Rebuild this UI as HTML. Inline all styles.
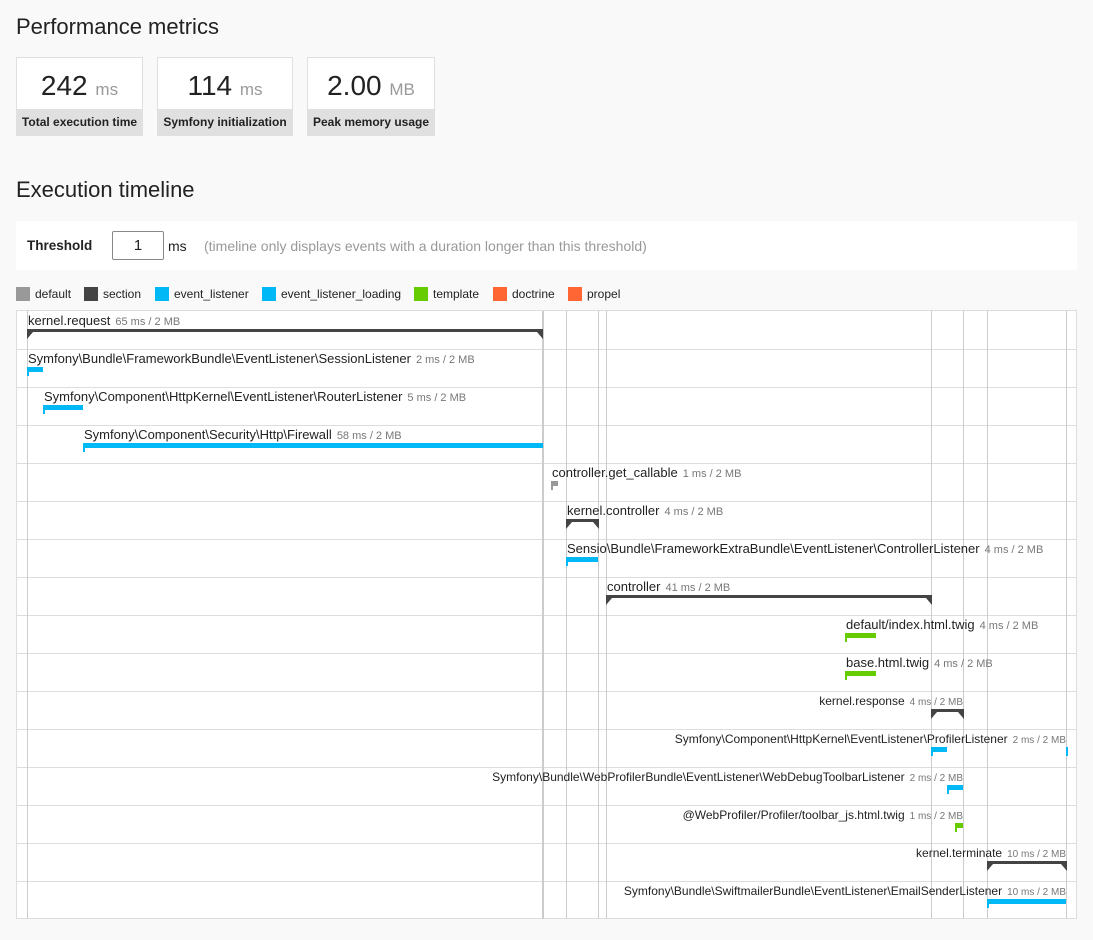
<!DOCTYPE html>
<html><head><meta charset="utf-8">
<style>
body{margin:0;background:#f9f9f9;font-family:"Liberation Sans",Arial,sans-serif;color:#222;width:1093px;height:940px;position:relative;overflow:hidden}
.a{position:absolute}
h2{position:absolute;margin:0;font-weight:normal;font-size:22px;color:#222}
.m{position:absolute;top:57px;height:79px;background:#fff;border:1px solid #e0e0e0;box-sizing:border-box;text-align:center}
.m .v{font-size:28px;line-height:28px;margin-top:14px;color:#222}
.m .v span{font-size:17px;color:#999}
.m .l{position:absolute;left:0;right:0;bottom:0;height:26px;line-height:26px;background:#e0e0e0;font-size:12px;font-weight:bold}
.lg{position:absolute;top:287px;font-size:12px;line-height:14px;padding-left:19px;color:#222}
.lg i{position:absolute;left:0;top:0;width:14px;height:14px}
.tl{position:absolute;left:16px;top:310px;width:1061px;height:609px;background:#fff;border:1px solid #ddd;box-sizing:border-box}
.hl{position:absolute;left:16px;width:1061px;height:1px;background:#ddd}
.vl{position:absolute;top:311px;height:608px;width:1px;background:#ccc}
.t{position:absolute;font-size:13px;white-space:nowrap;line-height:15px}
.t small{font-size:11px;color:#777;margin-left:5px}
.t.r{font-size:12px;margin-top:1px}
.t.r small{font-size:10px;margin-left:5px}
.sb{position:absolute;height:3px;background:#444}
.sb:before{content:"";position:absolute;left:0;top:3px;border-top:7px solid #444;border-right:6px solid transparent}
.sb:after{content:"";position:absolute;right:0;top:3px;border-top:7px solid #444;border-left:6px solid transparent}
.eb{position:absolute;height:5px}
.eb:before{content:"";position:absolute;left:0;top:5px;width:2px;height:4px;background:inherit}
</style></head><body>
<h2 style="left:16px;top:14px">Performance metrics</h2>
<div class="m" style="left:16px;width:127px"><div class="v">242 <span>ms</span></div><div class="l">Total execution time</div></div>
<div class="m" style="left:157px;width:136px"><div class="v">114 <span>ms</span></div><div class="l">Symfony initialization</div></div>
<div class="m" style="left:307px;width:128px"><div class="v">2.00 <span>MB</span></div><div class="l">Peak memory usage</div></div>
<h2 style="left:16px;top:177px">Execution timeline</h2>
<div class="a" style="left:16px;top:221px;width:1061px;height:49px;background:#fff"></div>
<div class="a" style="left:27px;top:238px;font-size:13.5px;font-weight:bold">Threshold</div>
<div class="a" style="left:112px;top:231px;width:50px;height:27px;border:1px solid #888;border-radius:2px;background:#fff;text-align:center;font-size:15px;line-height:27px">1</div>
<div class="a" style="left:168px;top:238px;font-size:14px">ms</div>
<div class="a" style="left:204px;top:238px;font-size:14px;color:#999">(timeline only displays events with a duration longer than this threshold)</div>

<div class="lg" style="left:16px"><i style="background:#999"></i>default</div>
<div class="lg" style="left:84px"><i style="background:#444"></i>section</div>
<div class="lg" style="left:155px"><i style="background:#00b8f5"></i>event_listener</div>
<div class="lg" style="left:262px"><i style="background:#00b8f5"></i>event_listener_loading</div>
<div class="lg" style="left:414px"><i style="background:#66cc00"></i>template</div>
<div class="lg" style="left:493px"><i style="background:#ff6633"></i>doctrine</div>
<div class="lg" style="left:568px"><i style="background:#ff6633"></i>propel</div>

<div class="tl"></div>
<div class="hl" style="top:349px"></div><div class="hl" style="top:387px"></div><div class="hl" style="top:425px"></div><div class="hl" style="top:463px"></div>
<div class="hl" style="top:501px"></div><div class="hl" style="top:539px"></div><div class="hl" style="top:577px"></div><div class="hl" style="top:615px"></div>
<div class="hl" style="top:653px"></div><div class="hl" style="top:691px"></div><div class="hl" style="top:729px"></div><div class="hl" style="top:767px"></div>
<div class="hl" style="top:805px"></div><div class="hl" style="top:843px"></div><div class="hl" style="top:881px"></div>
<div class="vl" style="left:27px"></div><div class="vl" style="left:542px;width:2px"></div><div class="vl" style="left:566px"></div>
<div class="vl" style="left:598px"></div><div class="vl" style="left:606px"></div><div class="vl" style="left:931px"></div>
<div class="vl" style="left:963px"></div><div class="vl" style="left:987px"></div><div class="vl" style="left:1066px"></div>

<div class="t" style="left:28px;top:313px">kernel.request<small>65 ms / 2 MB</small></div>
<div class="sb" style="left:27px;top:329px;width:516px"></div>
<div class="t" style="left:28px;top:351px">Symfony\Bundle\FrameworkBundle\EventListener\SessionListener<small>2 ms / 2 MB</small></div>
<div class="eb" style="left:27px;top:367px;width:16px;background:#00b8f5"></div>
<div class="t" style="left:44px;top:389px">Symfony\Component\HttpKernel\EventListener\RouterListener<small>5 ms / 2 MB</small></div>
<div class="eb" style="left:43px;top:405px;width:40px;background:#00b8f5"></div>
<div class="t" style="left:84px;top:427px">Symfony\Component\Security\Http\Firewall<small>58 ms / 2 MB</small></div>
<div class="eb" style="left:83px;top:443px;width:460px;background:#00b8f5"></div>
<div class="t" style="left:552px;top:465px">controller.get_callable<small>1 ms / 2 MB</small></div>
<div class="eb" style="left:551px;top:481px;width:7px;background:#999"></div>
<div class="t" style="left:567px;top:503px">kernel.controller<small>4 ms / 2 MB</small></div>
<div class="sb" style="left:566px;top:519px;width:33px"></div>
<div class="t" style="left:567px;top:541px">Sensio\Bundle\FrameworkExtraBundle\EventListener\ControllerListener<small>4 ms / 2 MB</small></div>
<div class="eb" style="left:566px;top:557px;width:32px;background:#00b8f5"></div>
<div class="t" style="left:607px;top:579px">controller<small>41 ms / 2 MB</small></div>
<div class="sb" style="left:606px;top:595px;width:326px"></div>
<div class="t" style="left:846px;top:617px">default/index.html.twig<small>4 ms / 2 MB</small></div>
<div class="eb" style="left:845px;top:633px;width:31px;background:#66cc00"></div>
<div class="t" style="left:846px;top:655px">base.html.twig<small>4 ms / 2 MB</small></div>
<div class="eb" style="left:845px;top:671px;width:31px;background:#66cc00"></div>
<div class="t r" style="right:130px;top:693px">kernel.response<small>4 ms / 2 MB</small></div>
<div class="sb" style="left:931px;top:709px;width:33px"></div>
<div class="t r" style="right:27px;top:731px">Symfony\Component\HttpKernel\EventListener\ProfilerListener<small>2 ms / 2 MB</small></div>
<div class="eb" style="left:931px;top:747px;width:16px;background:#00b8f5"></div>
<div class="a" style="left:1066px;top:747px;width:2px;height:9px;background:#00b8f5"></div>
<div class="t r" style="right:130px;top:769px">Symfony\Bundle\WebProfilerBundle\EventListener\WebDebugToolbarListener<small>2 ms / 2 MB</small></div>
<div class="eb" style="left:947px;top:785px;width:16px;background:#00b8f5"></div>
<div class="t r" style="right:130px;top:807px">@WebProfiler/Profiler/toolbar_js.html.twig<small>1 ms / 2 MB</small></div>
<div class="eb" style="left:955px;top:823px;width:8px;background:#66cc00"></div>
<div class="t r" style="right:27px;top:845px">kernel.terminate<small>10 ms / 2 MB</small></div>
<div class="sb" style="left:987px;top:861px;width:80px"></div>
<div class="t r" style="right:27px;top:883px">Symfony\Bundle\SwiftmailerBundle\EventListener\EmailSenderListener<small>10 ms / 2 MB</small></div>
<div class="eb" style="left:987px;top:899px;width:79px;background:#00b8f5"></div>
</body></html>
